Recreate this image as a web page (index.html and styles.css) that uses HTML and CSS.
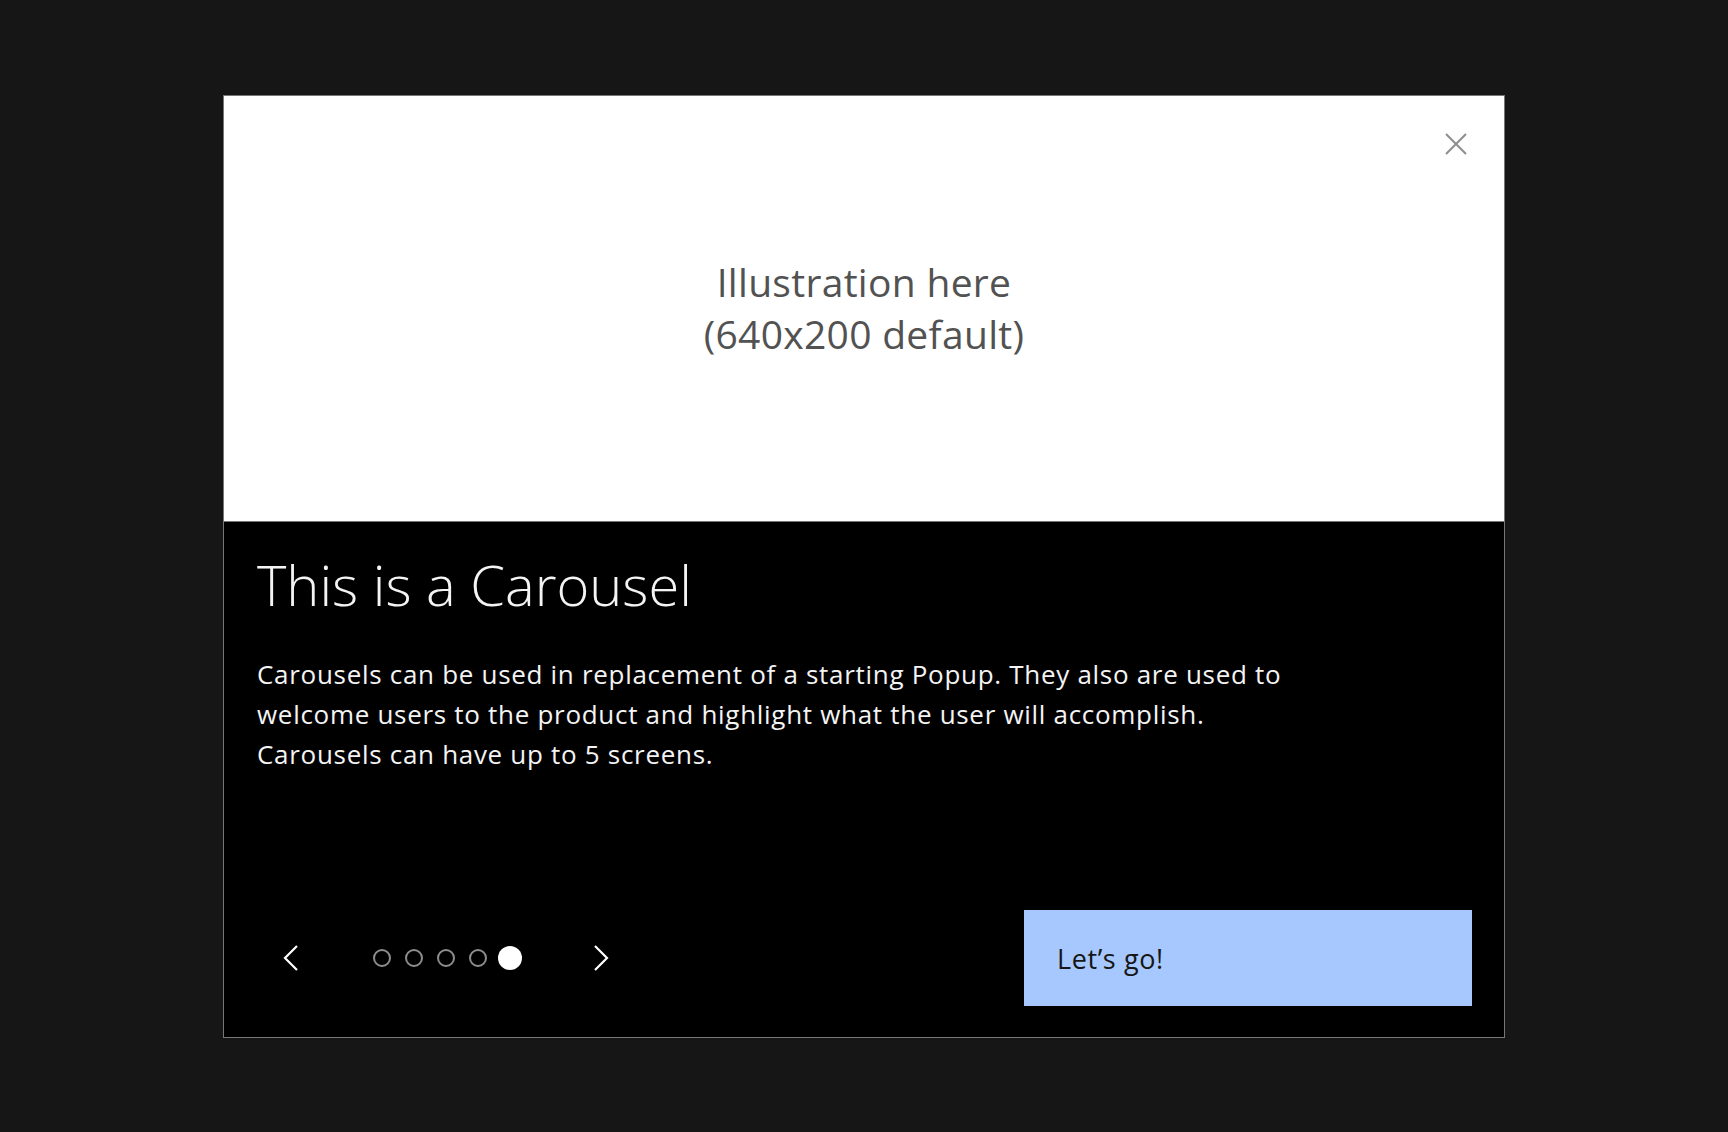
FILE: index.html
```html
<!DOCTYPE html>
<html lang="en">
<head>
<meta charset="utf-8">
<title>Carousel</title>
<link rel="stylesheet" href="styles.css">
</head>
<body>
<div class="modal">
  <div class="illustration">
    <p class="illustration-text">Illustration here<br>(640x200 default)</p>
    <button class="close" aria-label="Close">
      <svg width="22" height="22" viewBox="0 0 22 22"><path d="M1 1 L21 21 M21 1 L1 21" stroke="#8d8d8d" stroke-width="2" fill="none"/></svg>
    </button>
  </div>
  <div class="panel">
    <h1 class="title">This is a Carousel</h1>
    <p class="body">Carousels can be used in replacement of a starting Popup. They also are used to welcome users to the product and highlight what the user will accomplish. Carousels can have up to 5 screens.</p>
    <div class="footer">
      <div class="nav">
        <button class="chev" aria-label="Previous">
          <svg width="16" height="28" viewBox="0 0 16 28"><path d="M14 2 L2 14 L14 26" stroke="#ffffff" stroke-width="2.2" fill="none"/></svg>
        </button>
        <div class="dots">
          <span class="dot"></span>
          <span class="dot"></span>
          <span class="dot"></span>
          <span class="dot"></span>
          <span class="dot active"></span>
        </div>
        <button class="chev" aria-label="Next">
          <svg width="16" height="28" viewBox="0 0 16 28"><path d="M2 2 L14 14 L2 26" stroke="#ffffff" stroke-width="2.2" fill="none"/></svg>
        </button>
      </div>
      <button class="primary">Let’s go!</button>
    </div>
  </div>
</div>
</body>
</html>
```

FILE: styles.css
```css
html, body {
  margin: 0;
  padding: 0;
  background: #161616;
}
body {
  padding: 95px 0 0 223px;
  font-family: "Open Sans", "Noto Sans", sans-serif;
}
.modal {
  width: 1280px;
  height: 941px;
  border: 1px solid #767676;
  display: flex;
  flex-direction: column;
  background: #000;
}
.illustration {
  position: relative;
  height: 425px;
  background: #fff;
  border-bottom: 1px solid #767676;
  display: flex;
  align-items: center;
  justify-content: center;
}
.illustration-text {
  margin: 0;
  text-align: center;
  font-size: 39px;
  line-height: 52px;
  letter-spacing: 0.3px;
  color: #525252;
  padding-bottom: 2px;
}
.close {
  position: absolute;
  top: 0;
  right: 0;
  width: 96px;
  height: 96px;
  border: 0;
  background: transparent;
  padding: 0;
  display: flex;
  align-items: center;
  justify-content: center;
}
.panel {
  flex: 1;
  background: #000;
  padding: 27px 32px 31px 33px;
  display: flex;
  flex-direction: column;
  color: #f4f4f4;
}
.title {
  margin: 0;
  font-weight: 300;
  font-size: 56px;
  line-height: 70px;
  color: #f4f4f4;
}
.body {
  margin: 35px 0 0;
  font-size: 26px;
  line-height: 40px;
  letter-spacing: 0.7px;
  max-width: 1045px;
  color: #f4f4f4;
}
.footer {
  margin-top: auto;
  display: flex;
  align-items: center;
  justify-content: space-between;
}
.nav {
  display: flex;
  align-items: center;
  gap: 41px;
}
.chev {
  width: 68px;
  height: 64px;
  border: 0;
  background: transparent;
  padding: 0;
  display: flex;
  align-items: center;
  justify-content: center;
}
.dots {
  display: flex;
  align-items: center;
}
.dot {
  width: 32px;
  height: 32px;
  display: flex;
  align-items: center;
  justify-content: center;
}
.dot::before {
  content: "";
  width: 14px;
  height: 14px;
  border: 2px solid #8d8d8d;
  border-radius: 50%;
}
.dot.active::before {
  width: 24px;
  height: 24px;
  border: 0;
  background: #fff;
}
.primary {
  width: 448px;
  height: 96px;
  border: 0;
  background: #a6c8ff;
  color: #161616;
  font-family: "Open Sans", "Noto Sans", sans-serif;
  font-size: 27px;
  letter-spacing: 0.6px;
  text-align: left;
  padding: 0 0 0 33px;
}
```
